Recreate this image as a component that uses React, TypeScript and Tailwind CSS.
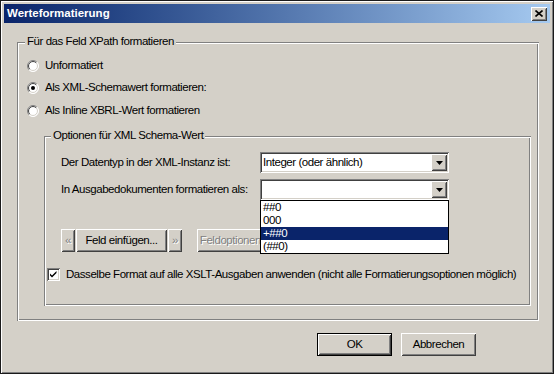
import React from "react";

const raised =
  "shadow-[inset_1px_1px_0_#ffffff,inset_-1px_-1px_0_#404040,inset_2px_2px_0_#d4d0c8,inset_-2px_-2px_0_#808080]";
const sunken =
  "shadow-[inset_1px_1px_0_#808080,inset_-1px_-1px_0_#ffffff,inset_2px_2px_0_#404040,inset_-2px_-2px_0_#d4d0c8]";
const etched =
  "shadow-[inset_1px_1px_0_#808080,inset_-1px_-1px_0_#ffffff,inset_2px_2px_0_#ffffff,inset_-2px_-2px_0_#808080]";

function Radio({ checked }: { checked?: boolean }) {
  const p = (r: number) => {
    const d = r * Math.SQRT1_2;
    return {
      a: `M${6 - d} ${6 + d} A${r} ${r} 0 0 1 ${6 + d} ${6 - d}`,
      b: `M${6 + d} ${6 - d} A${r} ${r} 0 0 1 ${6 - d} ${6 + d}`,
    };
  };
  const o = p(5.5);
  const i = p(4.5);
  return (
    <svg width="12" height="12" viewBox="0 0 12 12" className="shrink-0">
      <circle cx="6" cy="6" r="5.5" fill="#ffffff" />
      <path d={o.a} stroke="#808080" fill="none" />
      <path d={o.b} stroke="#ffffff" fill="none" />
      <path d={i.a} stroke="#404040" fill="none" />
      <path d={i.b} stroke="#d4d0c8" fill="none" />
      {checked && <circle cx="6" cy="6" r="2" fill="#000000" />}
    </svg>
  );
}

function Checkbox() {
  return (
    <div className={`w-[13px] h-[13px] bg-white ${sunken} shrink-0 flex items-center justify-center`}>
      <svg width="9" height="9" viewBox="0 0 9 9">
        <path d="M1 3.5 L3 5.5 L7.5 1 V3 L3 7.5 L1 5.5 Z" fill="#000000" />
      </svg>
    </div>
  );
}

function ComboArrow() {
  return (
    <div className={`w-[16px] h-[17px] bg-[#d4d0c8] ${raised} flex items-center justify-center`}>
      <svg width="7" height="4" viewBox="0 0 7 4">
        <path d="M0 0 H7 L3.5 4 Z" fill="#000000" />
      </svg>
    </div>
  );
}

function Combo({ value }: { value: string }) {
  return (
    <div className={`w-[189px] h-[21px] bg-white ${sunken} p-[2px] flex items-center shrink-0`}>
      <div className="flex-1 pl-[1px] leading-[17px] whitespace-nowrap">{value}</div>
      <ComboArrow />
    </div>
  );
}

function Button({
  children,
  w,
  disabled,
  def,
}: {
  children: React.ReactNode;
  w: string;
  disabled?: boolean;
  def?: boolean;
}) {
  const inner = (
    <div
      className={`${def ? "w-full h-full" : `${w} h-[23px]`} bg-[#d4d0c8] ${raised} flex items-center justify-center whitespace-nowrap ${
        disabled ? "text-[#808080] [text-shadow:1px_1px_0_#ffffff]" : "text-black"
      }`}
    >
      {children}
    </div>
  );
  if (def)
    return <div className={`${w} h-[23px] border border-black`}>{inner}</div>;
  return inner;
}

export default function App() {
  return (
    <div
      className={`w-[554px] h-[374px] bg-[#d4d0c8] p-[4px] shadow-[inset_1px_1px_0_#1a1a1a,inset_-1px_-1px_0_#1a1a1a,inset_2px_2px_0_#ffffff,inset_-2px_-2px_0_#808080] font-['Liberation_Sans',Arial,sans-serif] text-[11.5px] tracking-[-0.45px] leading-[13px] text-black flex flex-col overflow-hidden`}
    >
      {/* Title bar */}
      <div className="h-[19px] bg-linear-to-r from-[#0a246a] to-[#a6caf0] flex items-center pl-[3px] pr-[3px] shrink-0">
        <span className="font-bold text-[11.5px] tracking-normal text-white leading-[13px]">
          Werteformatierung
        </span>
        <div className={`ml-auto w-[16px] h-[14px] bg-[#d4d0c8] ${raised} flex items-center justify-center`}>
          <svg width="8" height="7" viewBox="0 0 8 7">
            <path d="M0.5 0.5 L7.5 6.5 M7.5 0.5 L0.5 6.5" stroke="#000000" strokeWidth="1.6" />
          </svg>
        </div>
      </div>

      <div className="ml-[13px] mt-[19px] flex flex-col">
        {/* Group box 1 */}
        <div className={`relative w-[522px] h-[279px] ${etched} pt-[17px] pl-[10px]`}>
          <div className="absolute left-[8px] top-[-7px] px-[2px] bg-[#d4d0c8] leading-[13px] whitespace-nowrap">
            Für das Feld XPath formatieren
          </div>
          <div className="flex flex-col">
            <div className="flex items-center h-[13px]">
              <Radio />
              <span className="ml-[6px]">Unformatiert</span>
            </div>
            <div className="flex items-center h-[13px] mt-[9px]">
              <Radio checked />
              <span className="ml-[6px]">Als XML-Schemawert formatieren:</span>
            </div>
            <div className="flex items-center h-[13px] mt-[10px]">
              <Radio />
              <span className="ml-[6px]">Als Inline XBRL-Wert formatieren</span>
            </div>
          </div>

          {/* Group box 2 */}
          <div className={`relative ml-[17px] mt-[19px] w-[487px] h-[170px] ${etched} pt-[16px]`}>
            <div className="absolute left-[7px] top-[-7px] px-[2px] bg-[#d4d0c8] leading-[13px] whitespace-nowrap">
              Optionen für XML Schema-Wert
            </div>
            <div className="flex items-center pl-[17px]">
              <div className="w-[199px] whitespace-nowrap">Der Datentyp in der XML-Instanz ist:</div>
              <Combo value="Integer (oder ähnlich)" />
            </div>
            <div className="flex items-center pl-[17px] mt-[6px]">
              <div className="w-[199px] whitespace-nowrap">In Ausgabedokumenten formatieren als:</div>
              <Combo value="" />
            </div>
            <div className="flex items-center pl-[17px] mt-[29px]">
              <Button w="w-[14px]" disabled>
                «
              </Button>
              <div className="ml-[1px]">
                <Button w="w-[91px]">Feld einfügen...</Button>
              </div>
              <div className="ml-[1px]">
                <Button w="w-[14px]" disabled>
                  »
                </Button>
              </div>
              <div className="ml-[15px]">
                <Button w="w-[75px]" disabled>
                  Feldoptionen...
                </Button>
              </div>
            </div>
            <div className="flex items-center pl-[3px] mt-[16px] h-[13px]">
              <Checkbox />
              <span className="ml-[6px] whitespace-nowrap">
                Dasselbe Format auf alle XSLT-Ausgaben anwenden (nicht alle Formatierungsoptionen möglich)
              </span>
            </div>

            {/* Open dropdown list */}
            <div className="absolute left-[216px] top-[64px] w-[189px] h-[54px] border border-black bg-white z-10 flex flex-col">
              <div className="h-[13px] pl-[2px] leading-[13px]">##0</div>
              <div className="h-[13px] pl-[2px] leading-[13px]">000</div>
              <div className="h-[13px] pl-[2px] leading-[13px] bg-[#0a246a] text-white">+##0</div>
              <div className="h-[13px] pl-[2px] leading-[13px]">(##0)</div>
            </div>
          </div>
        </div>

        {/* Dialog buttons */}
        <div className="flex mt-[12px] pl-[300px] gap-[9px]">
          <Button w="w-[75px]" def>
            OK
          </Button>
          <Button w="w-[75px]">Abbrechen</Button>
        </div>
      </div>
    </div>
  );
}
